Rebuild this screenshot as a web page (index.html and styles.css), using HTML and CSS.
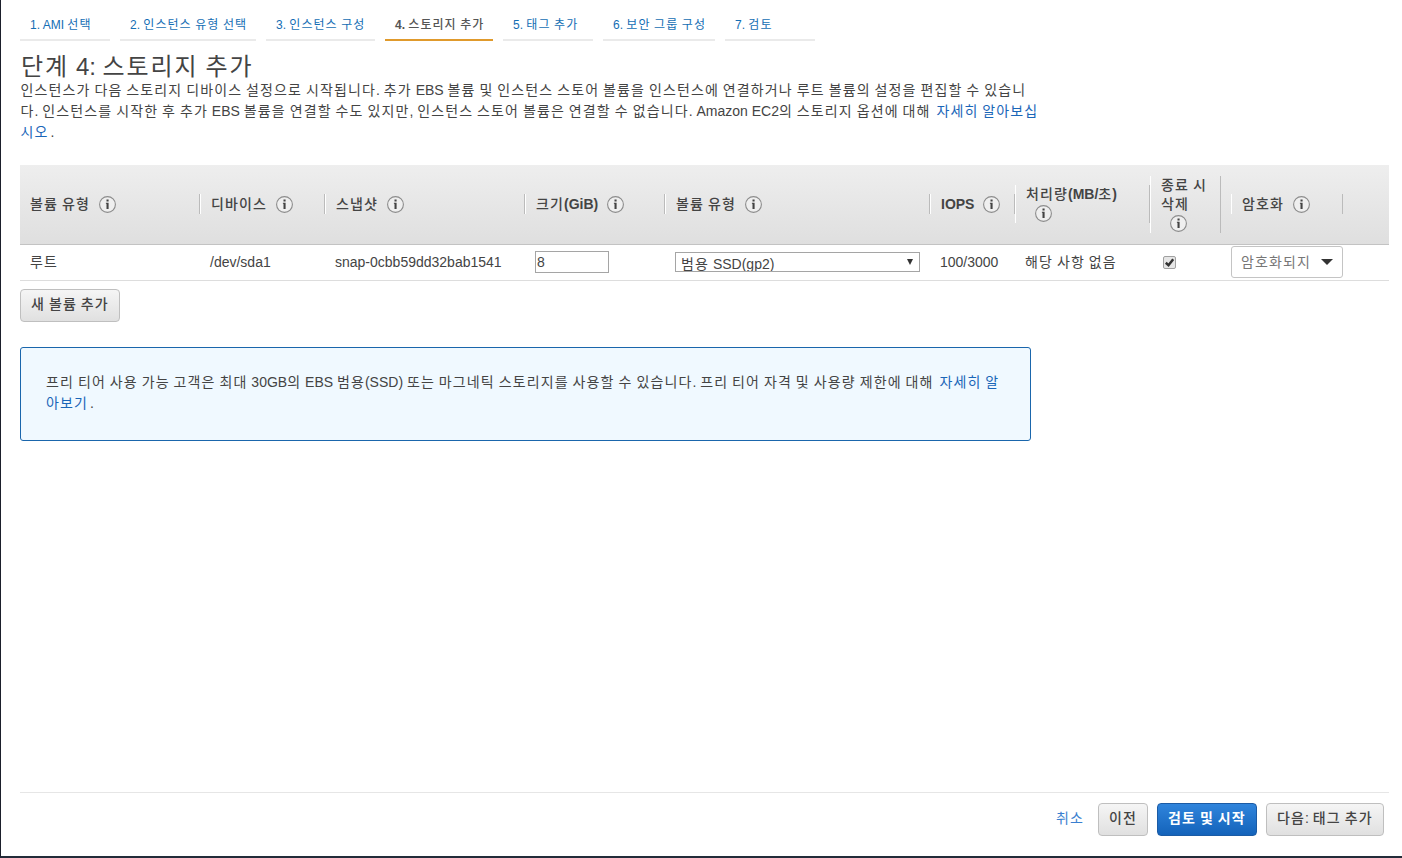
FILE: index.html
```html
<!DOCTYPE html>
<html lang="ko">
<head>
<meta charset="utf-8">
<title>단계 4: 스토리지 추가</title>
<link rel="stylesheet" href="styles.css">
</head>
<body>
<svg class="defs" width="0" height="0" aria-hidden="true">
  <symbol id="info" viewBox="0 0 18 18">
    <circle cx="9.5" cy="9.5" r="7.9" fill="#efefef" stroke="#8c8c8c" stroke-width="1.1"/>
    <path d="M8.5 4.6h2.1v1.9H8.5zM7.9 7.8h2.7V14H8.5V8.8h-.6z" fill="#444"/>
  </symbol>
</svg>
<div class="page">
  <nav class="steps">
    <a class="step w1"><i>1. AMI </i>선택</a>
    <a class="step w2"><i>2. </i>인스턴스 유형 선택</a>
    <a class="step w3"><i>3. </i>인스턴스 구성</a>
    <a class="step w4 active"><i>4. </i>스토리지 추가</a>
    <a class="step w5"><i>5. </i>태그 추가</a>
    <a class="step w6"><i>6. </i>보안 그룹 구성</a>
    <a class="step w7"><i>7. </i>검토</a>
  </nav>
  <h1>단계 <i>4: </i>스토리지 추가</h1>
  <p class="intro">인스턴스가 다음 스토리지 디바이스 설정으로 시작됩니다<i>. </i>추가 <i>EBS </i>볼륨 및 인스턴스 스토어 볼륨을 인스턴스에 연결하거나 루트 볼륨의 설정을 편집할 수 있습니<br>다<i>. </i>인스턴스를 시작한 후 추가 <i>EBS </i>볼륨을 연결할 수도 있지만<i>, </i>인스턴스 스토어 볼륨은 연결할 수 없습니다<i>. Amazon EC2</i>의 스토리지 옵션에 대해 <a class="ext">자세히 알아보십<br>시오</a><i class="stop">.</i></p>

  <div class="grid head">
    <div class="th"><span>볼륨 유형</span><svg class="info"><use href="#info"/></svg></div>
    <div class="th"><span>디바이스</span><svg class="info"><use href="#info"/></svg></div>
    <div class="th"><span>스냅샷</span><svg class="info"><use href="#info"/></svg></div>
    <div class="th"><span>크기<i>(GiB)</i></span><svg class="info"><use href="#info"/></svg></div>
    <div class="th"><span>볼륨 유형</span><svg class="info"><use href="#info"/></svg></div>
    <div class="th"><span><i>IOPS</i></span><svg class="info"><use href="#info"/></svg></div>
    <div class="th stack"><span>처리량<i>(MB/</i>초<i>)</i></span><svg class="info"><use href="#info"/></svg></div>
    <div class="th stack narrow"><span>종료 시<br>삭제</span><svg class="info"><use href="#info"/></svg></div>
    <div class="th"><span>암호화</span><svg class="info"><use href="#info"/></svg></div>
  </div>
  <div class="grid row">
    <div class="td">루트</div>
    <div class="td"><i>/dev/sda1</i></div>
    <div class="td"><i>snap-0cbb59dd32bab1541</i></div>
    <div class="td"><div class="size-input"><i>8</i></div></div>
    <div class="td"><div class="type-select"><span>범용 <i>SSD(gp2)</i></span><svg class="tri" viewBox="0 0 6 7"><path d="M0 0h6L3 6z" fill="#333"/></svg></div></div>
    <div class="td"><i>100/3000</i></div>
    <div class="td">해당 사항 없음</div>
    <div class="td check"><svg viewBox="0 0 13 13" width="13" height="13"><rect x=".5" y=".5" width="12" height="12" rx="1.5" fill="#e6e6e6" stroke="#a0a0a0"/><path d="M2.8 6.8l2.7 2.4L10.2 3.2" fill="none" stroke="#333" stroke-width="2.5"/></svg></div>
    <div class="td enc"><div class="combo"><span>암호화되지</span><svg viewBox="0 0 12 6" width="12" height="6"><path d="M0 0h12L6 6z" fill="#333"/></svg></div></div>
  </div>
  <div class="btn add">새 볼륨 추가</div>

  <div class="notice">프리 티어 사용 가능 고객은 최대 <i>30GB</i>의 <i>EBS </i>범용<i>(SSD) </i>또는 마그네틱 스토리지를 사용할 수 있습니다<i>. </i>프리 티어 자격 및 사용량 제한에 대해 <a class="ext">자세히 알<br>아보기</a><i class="stop">.</i></div>

  <footer class="actions">
    <a class="cancel">취소</a>
    <div class="btn prev">이전</div>
    <div class="btn primary">검토 및 시작</div>
    <div class="btn next">다음<i>: </i>태그 추가</div>
  </footer>
</div>
</body>
</html>
```
FILE: styles.css
```css
* { box-sizing: border-box; }
body { margin: 0; background: #fff; }
.defs { display: block; height: 0; }

.page {
  display: flex;
  flex-direction: column;
  width: 1402px;
  height: 858px;
  padding: 0 13px 0 19px;
  border-left: 1px solid #1b1f2b;
  border-bottom: 2px solid #232c39;
  overflow: hidden;
  color: #444;
  font: 14px/21px "Liberation Sans", "Noto Sans CJK KR", sans-serif;
  letter-spacing: .08em;
  word-spacing: -.08em;
  white-space: nowrap;
}
/* Latin runs keep their natural spacing */
i { font-style: normal; letter-spacing: 0; word-spacing: 0; }
a { color: #146eb4; }
.ext { margin-left: 2px; color: #1a66b8; }
.stop { margin-left: 2px; }

.steps { display: flex; gap: 10px; height: 41px; font-size: 12px; }
.step {
  height: 41px;
  padding: 15px 0 0 10px;
  border-bottom: 2px solid #eaeaea;
  letter-spacing: .085em;
  word-spacing: -.06em;
}
.step.active { color: #555; border-bottom-color: #e09a2c; font-weight: 500; }
.active i { font-weight: 700; }
.w1 { width: 90px; }
.w2 { width: 136px; }
.w3 { width: 109px; }
.w4 { width: 108px; }
.w5 { width: 90px; }
.w6 { width: 112px; }
.w7 { width: 90px; }

h1 {
  height: 39px;
  margin: 0;
  padding: 11px 0 0 1px;
  font-size: 24px;
  line-height: 30px;
  font-weight: 400;
  letter-spacing: .08em;
  word-spacing: -.07em;
}
.intro { height: 85px; margin: 0; padding-left: .5px; }

.grid {
  display: grid;
  grid-template-columns: 180px 125px 200px 140px 265px 85px 135px 81px 112px;
}
.head {
  height: 80px;
  align-items: center;
  padding-bottom: 1px;
  background: linear-gradient(#eee, #dfdfdf);
  border-bottom: 1px solid #c3c3c3;
  font-weight: 500;
  line-height: 19px;
}
.head i { font-weight: 700; }
.th {
  display: flex;
  align-items: center;
  gap: 8px;
  height: 20px;
  padding-left: 10px;
  border-left: 1px solid #fff;
  border-right: 1px solid #bbb;
}
.th:first-child { border-left: 0; }
.th .info { width: 18px; height: 18px; flex: none; }
.stack {
  flex-direction: column;
  align-items: flex-start;
  gap: 0;
  height: 38px;
}
.stack .info { margin-left: 8px; }
.narrow { width: 71px; height: 57px; }

.row { height: 36px; align-items: center; padding-bottom: 1px; border-bottom: 1px solid #ddd; }
.td { padding-left: 10px; }
.size-input {
  width: 74px;
  height: 22px;
  padding-left: 1px;
  border: 1px solid #a5a5a5;
  line-height: 21px;
}
.type-select {
  display: flex;
  justify-content: space-between;
  width: 245px;
  height: 20px;
  padding: 0 6px 0 5px;
  border: 1px solid #a5a5a5;
  line-height: 22px;
  overflow: hidden;
}
.tri { width: 6px; height: 7px; margin-top: 6px; }
.check svg { display: block; margin-left: 3px; }
.enc { padding-left: 0; }
.combo {
  display: flex;
  align-items: center;
  justify-content: space-between;
  width: 112px;
  height: 32px;
  padding: 0 9px;
  border: 1px solid #c4c4c4;
  border-radius: 3px;
  color: #777;
}

.btn {
  height: 33px;
  border: 1px solid #bfbfbf;
  border-radius: 4px;
  background: linear-gradient(#f5f5f5, #e0e0e0);
  line-height: 29px;
  padding-left: 10px;
  font-weight: 500;
}
.add { width: 100px; margin-top: 8px; }

.notice {
  width: 1011px;
  height: 94px;
  margin-top: 25px;
  padding: 24px 25px;
  border: 1px solid #1a66ac;
  border-radius: 3px;
  background: #f0f9ff;
}

.actions {
  display: flex;
  align-items: center;
  justify-content: flex-end;
  height: 64px;
  margin-top: auto;
  padding: 0 5px 10px 0;
  border-top: 1px solid #e6e6e6;
}
.cancel { margin: -2px 14px 0 0; color: #3a7fd0; }
.prev { width: 50px; }
.primary {
  width: 100px;
  margin: 0 9px;
  color: #fff;
  border-color: #1b5ba5;
  background: linear-gradient(#2f84dc, #1463ba);
  font-weight: 700;
}
.next { width: 118px; }
```
